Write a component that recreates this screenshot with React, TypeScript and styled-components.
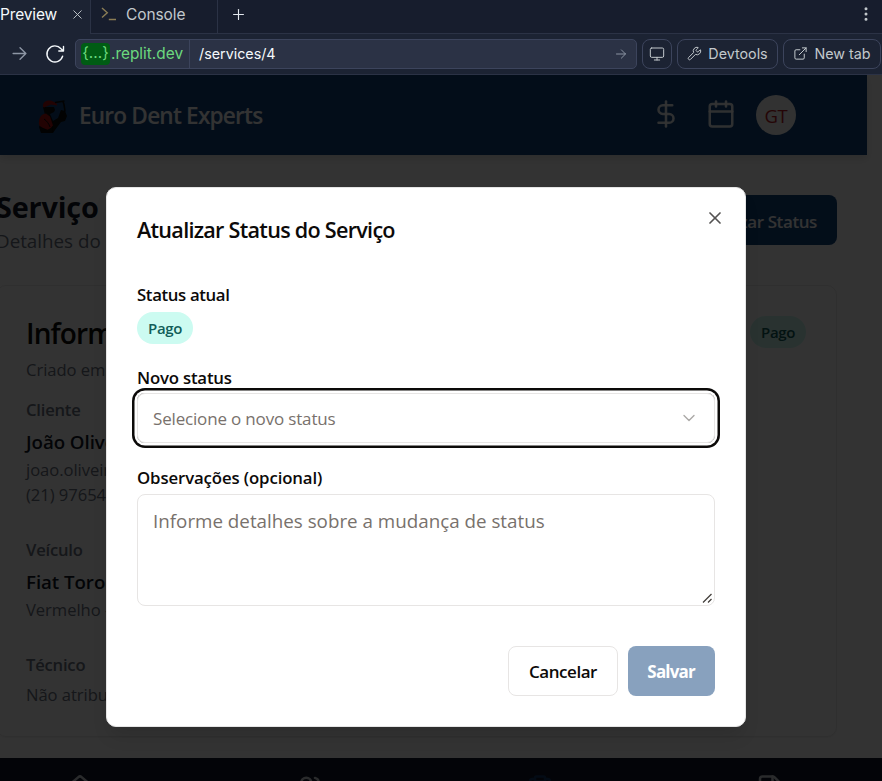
import React from "react";
import styled, { createGlobalStyle, css } from "styled-components";
import {
  Calendar,
  ChevronDown,
  ClipboardList,
  DollarSign,
  EllipsisVertical,
  ExternalLink,
  FileText,
  House,
  Monitor,
  Plus,
  Users,
  Wrench,
  X,
} from "lucide-react";

const Global = createGlobalStyle`
  *, *::before, *::after { box-sizing: border-box; }
  body { margin: 0; overflow: hidden; font-family: "Open Sans", "Noto Sans", sans-serif; }
  p, h1, h2, h3 { margin: 0; }
  button, textarea { font: inherit; }
`;

const Window = styled.div`
  width: 882px;
  height: 781px;
  display: flex;
  flex-direction: column;
  overflow: hidden;
  background: #1c2333;
`;

/* Workspace chrome */

const TabBar = styled.div`
  flex: none;
  height: 34px;
  display: flex;
  background: #171d2d;
  color: #c2c8cc;
  font: 400 15.5px/29px "Inter", sans-serif;
`;

const Tab = styled.div<{ $width: number; $active?: boolean }>`
  width: ${(p) => p.$width}px;
  display: flex;
  align-items: flex-start;
  border-right: 1px solid #2b3245;
  ${(p) =>
    p.$active
      ? css`
          background: #1c2333;
          color: #f5f9fc;
          justify-content: space-between;
          padding-right: 5px;
        `
      : css`
          border-bottom: 1px solid #2b3245;
          padding-left: 10px;
          gap: 9px;
        `}
`;

const TabLabel = styled.span<{ $spacing?: number }>`
  white-space: nowrap;
  letter-spacing: ${(p) => p.$spacing ?? 0}px;
`;

const TabIcon = styled.span`
  display: flex;
  height: 28px;
  align-items: center;
`;

const TabActions = styled.div`
  flex: 1;
  display: flex;
  justify-content: space-between;
  align-items: flex-start;
  padding: 0 7px 0 12px;
  border-bottom: 1px solid #2b3245;
`;

const Toolbar = styled.div`
  flex: none;
  height: 41px;
  display: flex;
  align-items: center;
  gap: 5px;
  padding-right: 1px;
  padding-bottom: 1px;
  border-bottom: 1px solid #2b3245;
  color: #c2c8cc;
  font: 400 14.3px/20px "Inter", sans-serif;
`;

const NavIcons = styled.div`
  width: 70px;
  display: flex;
  align-items: center;
  justify-content: space-between;
  padding: 0 5px 0 11px;
`;

const AddressBar = styled.div`
  flex: 1;
  height: 30px;
  display: flex;
  align-items: center;
  background: #2b3245;
  border: 1px solid #3c445c;
  border-radius: 5px;
  color: #f5f9fc;
`;

const Domain = styled.div`
  height: 28px;
  width: 114px;
  display: flex;
  align-items: center;
  padding-left: 5px;
  border-right: 1px solid #3c445c;
  color: #6cd97e;
  font-size: 15.4px;
  white-space: nowrap;
`;

const DomainToken = styled.span`
  width: 29px;
  height: 22px;
  border-radius: 4px;
  background: #005c14;
  text-align: center;
  line-height: 20px;
  margin-right: 1px;
`;

const Path = styled.span`
  flex: 1;
  padding-left: 9px;
`;

const ArrowSlot = styled.span`
  display: flex;
  padding-right: 9px;
`;

const ToolButton = styled.div<{ $width: number }>`
  width: ${(p) => p.$width}px;
  height: 30px;
  display: flex;
  align-items: center;
  justify-content: center;
  gap: 6px;
  border: 1px solid #3c445c;
  border-radius: 8px;
  white-space: nowrap;
`;

/* Previewed application */

const Viewport = styled.div`
  position: relative;
  flex: 1;
  min-height: 0;
  overflow: hidden;
  display: flex;
  flex-direction: column;
  background: #fff;
`;

const AppHeader = styled.header`
  flex: none;
  width: 867px;
  height: 80px;
  display: flex;
  align-items: center;
  padding: 0 71px 0 36px;
  background: #11447d;
  color: #fff;
  box-shadow: 0 4px 8px rgba(0, 0, 0, 0.12);
`;

const Brand = styled.div`
  flex: 1;
  display: flex;
  align-items: center;
  gap: 11px;
  padding-top: 1px;
  font-size: 22.6px;
  font-weight: 600;
  letter-spacing: -0.8px;
  line-height: 36px;
`;

const HeaderActions = styled.div`
  display: flex;
  align-items: center;
  gap: 20px;
  color: rgba(255, 255, 255, 0.92);
`;

const HeaderIcon = styled.span`
  display: flex;
  width: 35px;
  padding-left: 5px;
  padding-bottom: 2px;
`;

const Avatar = styled.div`
  width: 40px;
  height: 40px;
  border-radius: 50%;
  background: #f8f8f8;
  color: #b81c24;
  display: grid;
  place-items: center;
  font-size: 18.5px;
  letter-spacing: -0.3px;
`;

const Content = styled.main`
  flex: none;
  width: 841px;
  height: 603px;
  margin-left: -4px;
  padding-top: 40px;
`;

const PageHead = styled.div`
  height: 90px;
  display: flex;
  justify-content: space-between;
  align-items: flex-start;
`;

const PageTitle = styled.h1`
  font-size: 28.8px;
  line-height: 24px;
  font-weight: 700;
  letter-spacing: -0.15px;
  color: #111827;
`;

const PageSubtitle = styled.p`
  margin-top: 8px;
  font-size: 18.8px;
  line-height: 28px;
  color: #6b7280;
`;

const PrimaryButton = styled.button<{ $width: number; $muted?: boolean }>`
  width: ${(p) => p.$width}px;
  height: 50px;
  border: 0;
  border-radius: 8px;
  background: #13457f;
  color: #fff;
  opacity: ${(p) => (p.$muted ? 0.5 : 1)};
  font-size: 17px;
  font-weight: ${(p) => (p.$muted ? 700 : 600)};
  letter-spacing: ${(p) => (p.$muted ? -0.8 : -0.4)}px;
  padding: ${(p) => (p.$muted ? 0 : 2)}px 20px 0 18px;
  text-align: right;
  white-space: nowrap;
`;

const Card = styled.section`
  height: 452px;
  padding: 30px 30px 0 29px;
  border: 1px solid #e8e8e8;
  border-radius: 10px;
  box-shadow: 0 1px 2px rgba(0, 0, 0, 0.06);
`;

const CardHead = styled.div`
  display: flex;
  justify-content: space-between;
`;

const CardTitle = styled.h2`
  font-size: 28px;
  font-weight: 600;
  line-height: 34px;
  letter-spacing: -0.9px;
  color: #0c0a09;
`;

const Line = styled.p<{ $height: number; $top?: number; $kind?: "label" | "name" }>`
  margin-top: ${(p) => p.$top ?? 0}px;
  font-size: ${(p) => (p.$kind === "name" ? 18.7 : 16.6)}px;
  font-weight: ${(p) => (p.$kind ? 600 : 400)};
  letter-spacing: ${(p) => (p.$kind === "name" ? -0.05 : p.$kind ? -0.2 : -0.05)}px;
  line-height: ${(p) => p.$height}px;
  color: ${(p) => (p.$kind === "name" ? "#111827" : "#6b7280")};
  white-space: nowrap;
`;

const StatusPill = styled.span`
  width: 56px;
  height: 32px;
  border-radius: 16px;
  background: #ccfbf1;
  color: #115e59;
  display: grid;
  place-items: center;
  font-size: 15px;
  font-weight: 600;
  letter-spacing: -0.4px;
`;

const BottomNav = styled.nav`
  flex: none;
  width: 920px;
  height: 80px;
  margin-left: -35px;
  padding-top: 16px;
  display: grid;
  grid-template-columns: repeat(4, 230px);
  background: #0f172a;
`;

const NavItem = styled.span<{ $active?: boolean }>`
  display: flex;
  justify-content: center;
  color: ${(p) => (p.$active ? "#123a69" : "#d1d5db")};
`;

/* Dialog */

const Overlay = styled.div`
  position: absolute;
  inset: 0;
  background: rgba(0, 0, 0, 0.8);
`;

const Dialog = styled.div`
  position: absolute;
  left: 106px;
  top: 112px;
  width: 640px;
  height: 540px;
  padding: 26px 30px 30px;
  display: flex;
  flex-direction: column;
  background: #fff;
  border: 1px solid #e5e5e5;
  border-radius: 10px;
  box-shadow: 0 12px 18px -4px rgba(0, 0, 0, 0.12);
  color: #0c0a09;
`;

const CloseButton = styled.span`
  position: absolute;
  top: 20px;
  right: 20px;
  display: flex;
  opacity: 0.7;
`;

const DialogTitle = styled.h2`
  font-size: 21.6px;
  font-weight: 600;
  line-height: 32px;
  letter-spacing: -0.73px;
`;

const Label = styled.label<{ $top: number; $spacing?: number }>`
  margin-top: ${(p) => p.$top}px;
  font-size: 16.8px;
  font-weight: 600;
  line-height: 24px;
  letter-spacing: ${(p) => p.$spacing ?? -0.3}px;
`;

const PillRow = styled.div`
  display: flex;
  padding-top: 5px;
`;

const Select = styled.div`
  flex: none;
  height: 50px;
  margin-top: 3px;
  padding: 0 15px;
  display: flex;
  align-items: center;
  justify-content: space-between;
  border: 1px solid #e7e5e4;
  border-radius: 8px;
  box-shadow: 0 0 0 2.5px #fff, 0 0 0 5px #0c0a09;
  color: #78716c;
  font-size: 17px;
  line-height: 24px;
  letter-spacing: -0.17px;
`;

const SelectText = styled.span`
  padding-top: 2px;
`;

const Chevron = styled.span`
  display: flex;
  opacity: 0.5;
`;

const NotesField = styled.div`
  position: relative;
  flex: none;
  height: 112px;
  margin-top: 4px;
`;

const Notes = styled.textarea`
  display: block;
  width: 100%;
  height: 100%;
  margin: 0;
  padding: 12px 15px;
  border: 1px solid #e7e5e4;
  border-radius: 8px;
  background: #fff;
  outline: none;
  resize: none;
  font-size: 18.8px;
  line-height: 28px;
  &::placeholder {
    color: #78716c;
    opacity: 1;
  }
`;

const Grip = styled.svg`
  position: absolute;
  right: 2px;
  bottom: 2px;
`;

const Actions = styled.div`
  margin-top: 40px;
  display: flex;
  justify-content: flex-end;
  gap: 10px;
`;

const OutlineButton = styled.button`
  width: 110px;
  height: 50px;
  padding: 0;
  border: 1px solid #e7e5e4;
  border-radius: 8px;
  background: #fff;
  color: #0c0a09;
  font-size: 17px;
  font-weight: 600;
  letter-spacing: -0.45px;
`;

const ArrowIcon = ({ size }: { size: number }) => (
  <svg width={size} height={size} viewBox="0 0 16 16" fill="none" stroke="#8d96a5" strokeWidth="1.3" strokeLinecap="round" strokeLinejoin="round">
    <path d="M2 8H14M8.5 2.5 14 8l-5.5 5.5" />
  </svg>
);

const ReloadIcon = () => (
  <svg width="20" height="20" viewBox="0 0 20 20" fill="none" stroke="#f5f9fc" strokeWidth="1.4" strokeLinecap="round" strokeLinejoin="round">
    <path d="M17.6 12.2A8 8 0 1 1 16 4.7L18.4 7M18.5 2.4V7h-4.7" />
  </svg>
);

const PromptIcon = () => (
  <svg width="16" height="16" viewBox="0 0 16 16" fill="none" stroke="#8b7d55" strokeWidth="1.4">
    <path d="M1 2l5.3 4.8L1 11.6M7.8 13.5H15" />
  </svg>
);

const BrandMark = () => (
  <svg width="32" height="36" viewBox="0 0 32 36">
    <path d="M7 9h11l1 3-1 2-4 2 3 7 5-3 3-8 4 1 2 5-2 5-4 1-6 8-2 3H5l-2-6 6-12z" fill="#0a0a0a" />
    <path d="M7 9C6 4 11 1.500 16 3l3 1.500 2 1.500v1.500l-6-1L8 9.500z" fill="#a80f10" />
    <path d="M3 24c0-5 3-8 7-8.500l4 3 3 9-4 5-7-3C3 28 2.500 26 3 24z" fill="#a80f10" />
    <path d="M4 29l7 3 4-2 2-2-1 6H5z" fill="#0a0a0a" />
    <path d="M19 4.500 28.500 3M27 3.500l1 3 1 7" fill="none" stroke="#0a0a0a" strokeWidth="1.6" />
    <path d="M8 21c3 2 5 5 6 8" fill="none" stroke="#0a0a0a" strokeWidth="1" />
  </svg>
);

export default function App() {
  return (
    <Window>
      <Global />
      <TabBar>
        <Tab $width={91} $active>
          <TabLabel $spacing={-0.15}>Preview</TabLabel>
          <TabIcon>
            <X size={15} strokeWidth={1.5} color="#c2c8cc" />
          </TabIcon>
        </Tab>
        <Tab $width={127}>
          <TabIcon>
            <PromptIcon />
          </TabIcon>
          <TabLabel $spacing={-0.1}>Console</TabLabel>
        </Tab>
        <TabActions>
          <TabIcon>
            <Plus size={17} strokeWidth={1.6} color="#e3e8ee" />
          </TabIcon>
          <TabIcon>
            <EllipsisVertical size={18} />
          </TabIcon>
        </TabActions>
      </TabBar>
      <Toolbar>
        <NavIcons>
          <ArrowIcon size={17} />
          <ReloadIcon />
        </NavIcons>
        <AddressBar>
          <Domain>
            <DomainToken>{"{...}"}</DomainToken>.replit.dev
          </Domain>
          <Path>/services/4</Path>
          <ArrowSlot>
            <ArrowIcon size={12} />
          </ArrowSlot>
        </AddressBar>
        <ToolButton $width={30}>
          <Monitor size={16} strokeWidth={1.5} />
        </ToolButton>
        <ToolButton $width={101}>
          <Wrench size={15} strokeWidth={1.6} />
          Devtools
        </ToolButton>
        <ToolButton $width={98}>
          <ExternalLink size={15} strokeWidth={1.6} />
          New tab
        </ToolButton>
      </Toolbar>

      <Viewport>
        <AppHeader>
          <Brand>
            <BrandMark />
            Euro Dent Experts
          </Brand>
          <HeaderActions>
            <HeaderIcon>
              <DollarSign size={30} />
            </HeaderIcon>
            <HeaderIcon>
              <Calendar size={30} />
            </HeaderIcon>
            <Avatar>GT</Avatar>
          </HeaderActions>
        </AppHeader>
        <Content>
          <PageHead>
            <div>
              <PageTitle>Serviço</PageTitle>
              <PageSubtitle>Detalhes do serviço</PageSubtitle>
            </div>
            <PrimaryButton $width={170}>Atualizar Status</PrimaryButton>
          </PageHead>
          <Card>
            <CardHead>
              <CardTitle>Informações</CardTitle>
              <StatusPill>Pago</StatusPill>
            </CardHead>
            <Line $height={24} $top={8}>Criado em</Line>
            <Line $height={24} $top={16} $kind="label">Cliente</Line>
            <Line $height={30} $top={5} $kind="name">João Oliveira</Line>
            <Line $height={25}>joao.oliveira</Line>
            <Line $height={25}>(21) 97654</Line>
            <Line $height={24} $top={31} $kind="label">Veículo</Line>
            <Line $height={30} $top={5} $kind="name">Fiat Toro</Line>
            <Line $height={25}>Vermelho - 2021</Line>
            <Line $height={24} $top={31} $kind="label">Técnico</Line>
            <Line $height={25} $top={5}>Não atribuído</Line>
          </Card>
        </Content>
        <BottomNav>
          <NavItem>
            <House size={30} />
          </NavItem>
          <NavItem>
            <Users size={30} />
          </NavItem>
          <NavItem $active>
            <ClipboardList size={30} />
          </NavItem>
          <NavItem>
            <FileText size={30} />
          </NavItem>
        </BottomNav>

        <Overlay />
        <Dialog role="dialog">
          <DialogTitle>Atualizar Status do Serviço</DialogTitle>
          <Label $top={37} $spacing={-0.36}>Status atual</Label>
          <PillRow>
            <StatusPill>Pago</StatusPill>
          </PillRow>
          <Label $top={22} $spacing={-0.2}>Novo status</Label>
          <Select>
            <SelectText>Selecione o novo status</SelectText>
            <Chevron>
              <ChevronDown size={20} strokeWidth={1.6} color="#57534e" />
            </Chevron>
          </Select>
          <Label $top={23} $spacing={-0.12}>Observações (opcional)</Label>
          <NotesField>
            <Notes placeholder="Informe detalhes sobre a mudança de status" />
            <Grip width="11" height="11" viewBox="0 0 11 11" stroke="#44403c" strokeWidth="1.3">
              <path d="M1 9.500 9.500 1M6 9.500 9.500 6" fill="none" />
            </Grip>
          </NotesField>
          <Actions>
            <OutlineButton>Cancelar</OutlineButton>
            <PrimaryButton $width={87} $muted>
              Salvar
            </PrimaryButton>
          </Actions>
          <CloseButton>
            <X size={20} strokeWidth={2} />
          </CloseButton>
        </Dialog>
      </Viewport>
    </Window>
  );
}
